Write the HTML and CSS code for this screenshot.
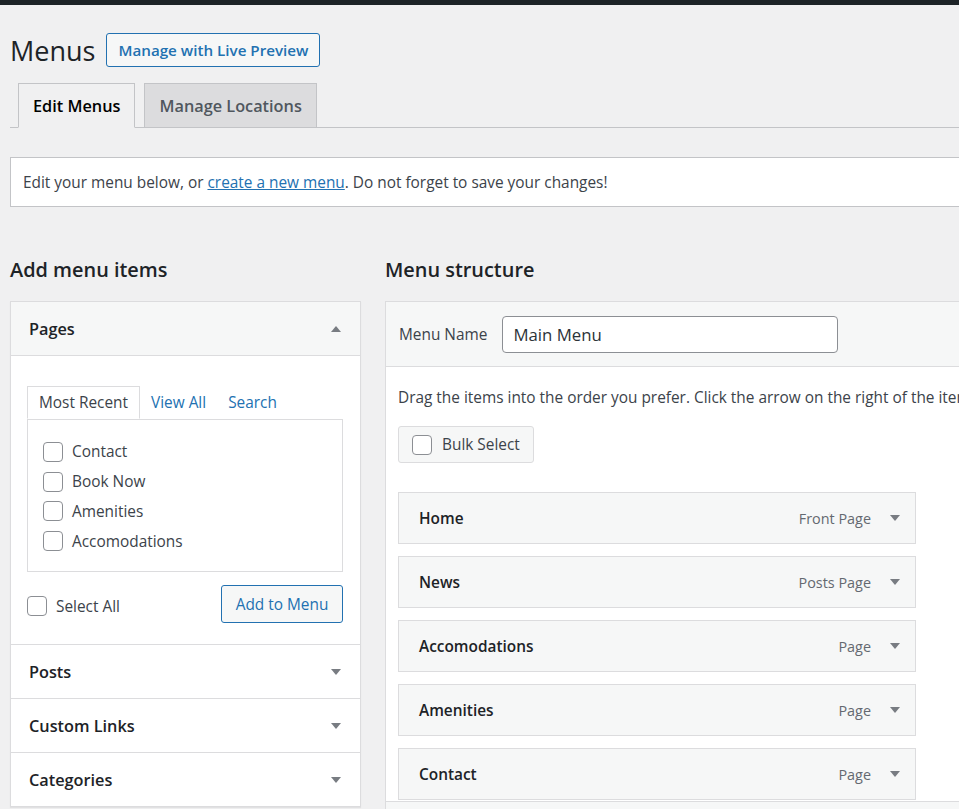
FILE: index.html
```html
<!DOCTYPE html>
<html lang="en">
<head>
<meta charset="utf-8">
<title>Menus</title>
<link rel="stylesheet" href="styles.css">
</head>
<body>
<div class="adminbar"></div>
<div class="wrap">
  <div class="title-row">
    <h1>Menus</h1>
    <a class="page-title-action" href="#">Manage with Live Preview</a>
  </div>
  <nav class="nav-tabs">
    <a class="nav-tab active" href="#">Edit Menus</a>
    <a class="nav-tab" href="#">Manage Locations</a>
  </nav>
  <div class="manage-menus">
    <span>Edit your menu below, or <a href="#">create a new menu</a>. Do not forget to save your changes!</span>
  </div>
  <div class="columns">
    <div class="col-left">
      <h2>Add menu items</h2>
      <div class="accordion">
        <div class="acc-section open">
          <div class="acc-head"><span>Pages</span><span class="tri up"></span></div>
          <div class="acc-body">
            <div class="tabs">
              <span class="tab active">Most Recent</span>
              <a class="tab" href="#">View All</a>
              <a class="tab" href="#">Search</a>
            </div>
            <div class="tab-panel">
              <label class="check-row"><span class="cb"></span>Contact</label>
              <label class="check-row"><span class="cb"></span>Book Now</label>
              <label class="check-row"><span class="cb"></span>Amenities</label>
              <label class="check-row"><span class="cb"></span>Accomodations</label>
            </div>
            <div class="acc-foot">
              <label class="check-row select-all"><span class="cb"></span>Select All</label>
              <span class="btn-secondary">Add to Menu</span>
            </div>
          </div>
        </div>
        <div class="acc-section">
          <div class="acc-head"><span>Posts</span><span class="tri"></span></div>
        </div>
        <div class="acc-section">
          <div class="acc-head"><span>Custom Links</span><span class="tri"></span></div>
        </div>
        <div class="acc-section">
          <div class="acc-head"><span>Categories</span><span class="tri"></span></div>
        </div>
      </div>
    </div>
    <div class="col-right">
      <h2>Menu structure</h2>
      <div class="menu-edit">
        <div class="menu-header">
          <span class="menu-name-label">Menu Name</span>
          <span class="menu-name-input">Main Menu</span>
        </div>
        <div class="menu-body">
          <p class="drag-text">Drag the items into the order you prefer. Click the arrow on the right of the item to reveal additional configuration options.</p>
          <div class="bulk"><span class="cb"></span>Bulk Select</div>
          <div class="items">
            <div class="item"><span class="item-title">Home</span><span class="item-type">Front Page</span><span class="tri"></span></div>
            <div class="item"><span class="item-title">News</span><span class="item-type">Posts Page</span><span class="tri"></span></div>
            <div class="item"><span class="item-title">Accomodations</span><span class="item-type">Page</span><span class="tri"></span></div>
            <div class="item"><span class="item-title">Amenities</span><span class="item-type">Page</span><span class="tri"></span></div>
            <div class="item"><span class="item-title">Contact</span><span class="item-type">Page</span><span class="tri"></span></div>
          </div>
        </div>
        <div class="menu-footer"></div>
      </div>
    </div>
  </div>
</div>
</body>
</html>
```
FILE: styles.css
```css
* { box-sizing: border-box; }
html, body { margin: 0; padding: 0; overflow: hidden; }
body {
  width: 959px;
  height: 809px;
  background: #f0f0f1;
  font-family: "Open Sans", "Noto Sans", sans-serif;
  font-size: 15.4px;
  color: #3c434a;
}
a { color: #2271b1; text-decoration: none; }

.adminbar { height: 5px; background: #1d2327; }
.wrap { padding-left: 10px; width: 1200px; }

.title-row {
  display: flex;
  align-items: center;
  gap: 11px;
  padding-top: 28px;
}
h1 {
  margin: 0;
  font-size: 27px;
  font-weight: 400;
  line-height: 33px;
  color: #1d2327;
}
.page-title-action {
  display: flex;
  align-items: center;
  height: 34px;
  padding: 0 11px;
  border: 1px solid #2271b1;
  border-radius: 3px;
  background: #f6f7f7;
  color: #2271b1;
  font-size: 15.2px;
  font-weight: 600;
}

.nav-tabs {
  display: flex;
  align-items: flex-end;
  gap: 9px;
  margin-top: 16px;
  padding-left: 8px;
  border-bottom: 1px solid #c3c4c7;
}
.nav-tab {
  height: 45px;
  margin-bottom: -1px;
  padding: 0 14px;
  display: flex;
  align-items: center;
  border: 1px solid #c3c4c7;
  background: #dcdcde;
  color: #50575e;
  font-size: 16.3px;
  font-weight: 600;
}
.nav-tab.active {
  background: #f0f0f1;
  color: #000;
  border-bottom-color: #f0f0f1;
}

.manage-menus {
  margin-top: 29px;
  height: 50px;
  padding: 0 12px;
  display: flex;
  align-items: center;
  border: 1px solid #c3c4c7;
  background: #fff;
}
.manage-menus a { text-decoration: underline; }

.columns {
  display: flex;
  gap: 24px;
  margin-top: 48px;
}
.col-left { width: 351px; flex: none; }
.col-right { width: 760px; flex: none; }
h2 {
  margin: 0 0 16px;
  font-size: 19.9px;
  font-weight: 600;
  line-height: 30px;
  color: #1d2327;
}

.accordion {
  background: #fff;
  border: 1px solid #dcdcde;
  box-shadow: 0 1px 1px rgba(0, 0, 0, 0.06);
}
.acc-section + .acc-section { border-top: 1px solid #dcdcde; }
.acc-head {
  height: 53px;
  display: flex;
  align-items: center;
  justify-content: space-between;
  padding: 0 19px 0 18px;
  font-size: 16.3px;
  font-weight: 600;
  color: #1d2327;
}
.acc-section.open .acc-head {
  height: 54px;
  background: #f6f7f7;
  border-bottom: 1px solid #dcdcde;
}

.tri {
  width: 0;
  height: 0;
  border-left: 5px solid transparent;
  border-right: 5px solid transparent;
  border-top: 6px solid #787c82;
}
.tri.up {
  border-top: 0;
  border-bottom: 6px solid #787c82;
}

.acc-body { padding: 30px 17px 21px 16px; }
.tabs { display: flex; }
.tab {
  height: 33px;
  padding: 0 11px;
  display: flex;
  align-items: center;
  color: #2271b1;
}
.tab.active {
  position: relative;
  z-index: 1;
  margin-bottom: -1px;
  padding: 0 11px;
  border: 1px solid #dcdcde;
  border-bottom-color: #fff;
  background: #fff;
  color: #3c434a;
}
.tab-panel {
  height: 153px;
  padding: 17px 15px 13px;
  border: 1px solid #dcdcde;
}
.check-row {
  display: flex;
  align-items: center;
  gap: 9px;
  height: 29.75px;
}
.cb {
  width: 20px;
  height: 20px;
  flex: none;
  border: 1px solid #8c8f94;
  border-radius: 4px;
  background: #fff;
}
.acc-foot {
  margin-top: 13px;
  display: flex;
  align-items: center;
  justify-content: space-between;
}
.select-all { margin-top: 4px; }
.btn-secondary {
  height: 38px;
  width: 122px;
  display: flex;
  align-items: center;
  justify-content: center;
  border: 1px solid #2271b1;
  border-radius: 3px;
  background: #f6f7f7;
  color: #2271b1;
}

.menu-edit {
  border: 1px solid #dcdcde;
  background: #fff;
}
.menu-header {
  height: 65px;
  display: flex;
  align-items: center;
  gap: 15px;
  padding-left: 13px;
  background: #f6f7f7;
  border-bottom: 1px solid #dcdcde;
}
.menu-name-input {
  width: 336px;
  height: 37px;
  display: flex;
  align-items: center;
  padding-left: 10px;
  border: 1px solid #8c8f94;
  border-radius: 4px;
  background: #fff;
  color: #2c3338;
  font-size: 16.8px;
}
.menu-body { padding: 20px 12px 0; }
.drag-text {
  margin: 0;
  line-height: 22px;
  white-space: nowrap;
}
.bulk {
  margin-top: 17px;
  width: fit-content;
  height: 37px;
  display: flex;
  align-items: center;
  gap: 10px;
  padding: 0 13px;
  border: 1px solid #dcdcde;
  border-radius: 3px;
  background: #f6f7f7;
}
.items {
  margin-top: 29px;
  width: 518px;
  display: flex;
  flex-direction: column;
  gap: 12px;
}
.item {
  height: 52px;
  display: flex;
  align-items: center;
  padding: 0 15px 0 20px;
  border: 1px solid #dcdcde;
  background: #f6f7f7;
}
.item-title {
  flex: 1;
  font-weight: 600;
  color: #1d2327;
}
.item-type {
  margin-right: 19px;
  font-size: 14.4px;
  color: #646970;
}
.menu-footer {
  margin-top: 1px;
  height: 40px;
  border-top: 1px solid #dcdcde;
  background: #f6f7f7;
}
```
